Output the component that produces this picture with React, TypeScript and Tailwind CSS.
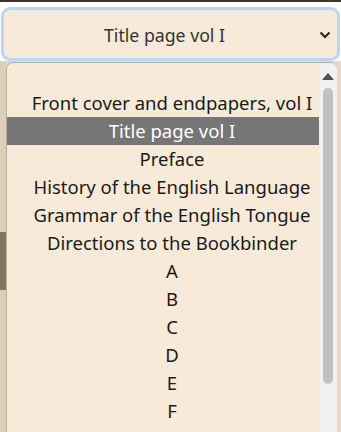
import React from 'react';

const opciones = [
  'Front cover and endpapers, vol I',
  'Title page vol I',
  'Preface',
  'History of the English Language',
  'Grammar of the English Tongue',
  'Directions to the Bookbinder',
  'A',
  'B',
  'C',
  'D',
  'E',
  'F',
];

export default function App() {
  const seleccion = 'Title page vol I';
  return (
    <div className="w-[341px] h-[432px] overflow-hidden bg-white flex flex-col" style={{ fontFamily: '"Noto Sans", "Open Sans", sans-serif' }}>
      <div className="h-[2px] bg-[#3b3431] shrink-0" />
      <div className="px-[1px] pt-[5px] shrink-0">
        <div className="h-[54px] rounded-[9px] border-[3px] border-[#b9d6f4] bg-[#f7ead8] flex items-center relative">
          <span className="flex-1 text-center text-[17.7px] text-[#333] pt-[3px] pr-[12px]">{seleccion}</span>
          <svg className="absolute right-[6px] top-[20px]" width="12" height="10" viewBox="0 0 12 10">
            <path d="M1.5 2.5 L6 7 L10.5 2.5" fill="none" stroke="#222" strokeWidth="2" />
          </svg>
        </div>
      </div>
      <div className="flex-1 flex bg-[#e6d9c6] pt-[1px]">
        <div className="w-[6px] shrink-0 flex flex-col bg-[#dccfba]">
          <div className="h-[170px]" />
          <div className="h-[58px] bg-[#857560]" />
        </div>
        <div className="flex-1 flex rounded-tl-[7px] rounded-tr-[7px] border-l border-t border-[#b7ada0] bg-[#f7ead8] overflow-hidden">
          <div className="flex-1 pt-[26px]">
            {opciones.map((o, i) => (
              <div
                key={i}
                className={`h-[28px] leading-[28px] pl-[18px] text-center text-[18.5px] whitespace-nowrap ${o === seleccion ? 'bg-[#767676] text-white' : 'text-[#1a1a1a]'}`}
              >
                {o}
              </div>
            ))}
          </div>
          <div className="w-[18px] bg-[#f0f0f0] flex flex-col items-center shrink-0">
            <svg className="mt-[9px]" width="12" height="8" viewBox="0 0 12 8">
              <path d="M0 8 L6 1 L12 8 Z" fill="#505050" />
            </svg>
            <div className="mt-[8px] w-[10px] h-[296px] rounded-full bg-[#c1c1c1]" />
          </div>
        </div>
        <div className="w-[4px] shrink-0" />
      </div>
    </div>
  );
}
